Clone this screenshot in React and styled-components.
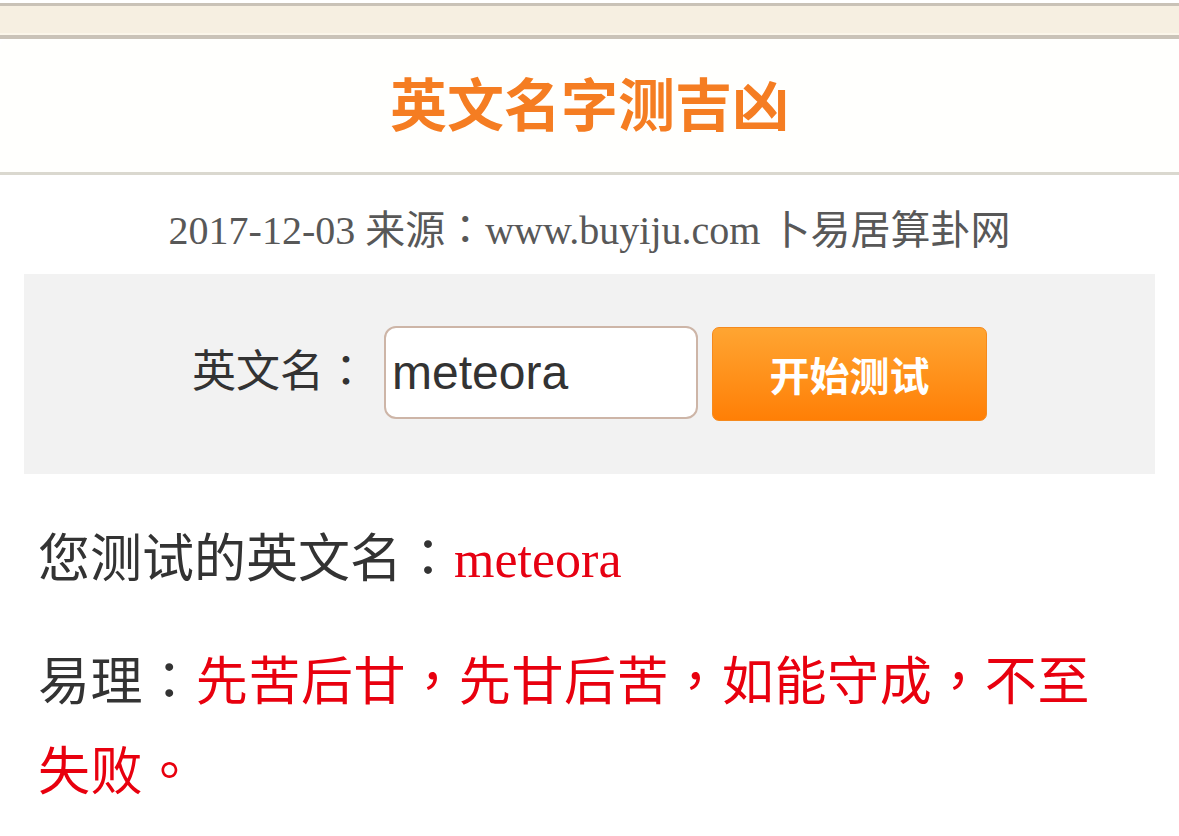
import styled, { createGlobalStyle } from 'styled-components'

const GlobalStyle = createGlobalStyle`
  html, body {
    margin: 0;
    padding: 0;
    background: #fff;
  }
  body {
    font-family: "Noto Sans CJK SC", "Liberation Sans", sans-serif;
    color: #333;
  }
`

// full-width punctuation sits centred in its cell on the original device
const P = ({children}) => <Punct>{children}</Punct>

const App = () => {
    return (
        <Page>
            <GlobalStyle/>
            <TopStrip/>
            <HeaderCard>
                <Title>英文名字测吉凶</Title>
            </HeaderCard>
            <DateLine>2017-12-03 来源<P>：</P>www.buyiju.com 卜易居算卦网</DateLine>
            <FormBox>
                <Label>英文名<P>：</P></Label>
                <NameInput defaultValue="meteora"/>
                <SubmitButton type="button">开始测试</SubmitButton>
            </FormBox>
            <Result>
                <ResultLine>您测试的英文名<P>：</P><Latin>meteora</Latin></ResultLine>
                <ResultLine wide>
                    易理<P>：</P>
                    <Red>先苦后甘<P>，</P>先甘后苦<P>，</P>如能守成<P>，</P>不至失败<P>。</P></Red>
                </ResultLine>
            </Result>
        </Page>
    );
}

export default App;


const Page = styled.div`
  width: 1179px;
  min-height: 836px;
  padding-top: 3px;
  background: #fff;
  overflow: hidden;
`

const Punct = styled.span`
  font-family: "Noto Sans CJK TC", sans-serif;
  line-height: 0;
`

const TopStrip = styled.div`
  height: 29px;
  background: #f6efe1;
  border-top: 3px solid #c9c2b7;
  border-bottom: 4px solid #cac3b8;
  box-shadow: inset 0 -2px 0 #fbf6ea;
`

const HeaderCard = styled.div`
  height: 133px;
  display: flex;
  align-items: center;
  justify-content: center;
  background: #fffffd;
  border-bottom: 3px solid #dad8cf;
  border-top-left-radius: 8px;
`

const Title = styled.h1`
  margin: -8px 0 0;
  font-size: 57px;
  line-height: 1;
  font-weight: 700;
  color: #f57d22;
`

const DateLine = styled.div`
  padding: 31px 0 18px;
  height: 50px;
  text-align: center;
  font-family: "Liberation Serif", "Noto Sans CJK SC", serif;
  font-size: 40px;
  line-height: 50px;
  color: #585858;
`

const FormBox = styled.div`
  margin: 0 24px;
  height: 200px;
  background: #f2f2f2;
  display: flex;
  align-items: center;
  justify-content: center;
  padding-bottom: 4px;
  box-sizing: border-box;
`

const Label = styled.span`
  font-size: 44px;
  line-height: 60px;
  color: #333;
  margin-right: 16px;
  margin-top: -8px;
`

const NameInput = styled.input`
  box-sizing: border-box;
  width: 314px;
  height: 93px;
  border: 2px solid #cdb5a7;
  border-radius: 12px;
  background: #fff;
  padding: 0 6px;
  font-family: "Liberation Sans", Arial, sans-serif;
  font-size: 48px;
  color: #333;
  outline: none;
  margin-right: 14px;
`

const SubmitButton = styled.button`
  box-sizing: border-box;
  width: 275px;
  height: 94px;
  margin-top: 4px;
  border: 1px solid #f58a1e;
  border-radius: 7px;
  background: linear-gradient(to bottom, #ffa532, #ff7f06);
  color: #fff;
  font-family: "Noto Sans CJK SC", sans-serif;
  font-size: 40px;
  font-weight: 700;
  padding: 0;
  cursor: pointer;
`

const Result = styled.div`
  padding: 36px 80px 0 38px;
`

const ResultLine = styled.p`
  margin: 0 0 28px;
  font-size: 52px;
  line-height: 90px;
  color: #333;
  letter-spacing: ${props => props.wide ? '0.6px' : '0'};
`

const Latin = styled.span`
  font-family: "Liberation Serif", serif;
  color: #e60012;
`

const Red = styled.span`
  color: #e8000e;
`
